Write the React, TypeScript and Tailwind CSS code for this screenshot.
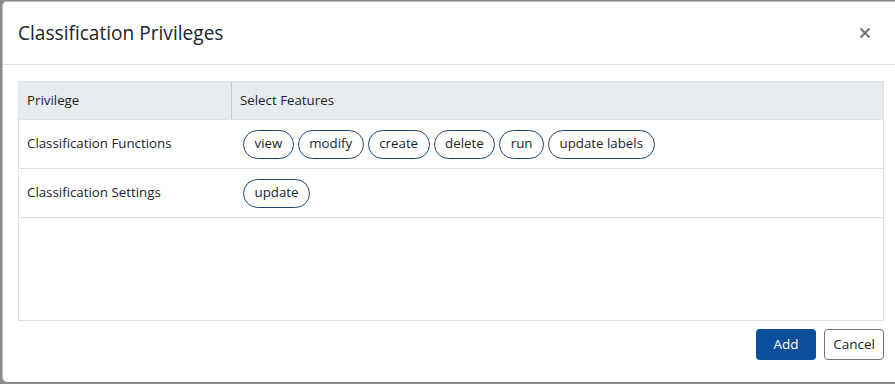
import React from "react";

const rows: { name: string; features: string[] }[] = [
  { name: "Classification Functions", features: ["view", "modify", "create", "delete", "run", "update labels"] },
  { name: "Classification Settings", features: ["update"] },
];

function Pill({ label }: { label: string }) {
  return (
    <button
      type="button"
      className="h-[29px] px-[10.5px] rounded-full border-[1.5px] border-[#1f4670] bg-white text-[13.3px] text-[#212529] leading-none"
    >
      {label}
    </button>
  );
}

export default function App() {
  return (
    <div
      className="w-[895px] h-[384px] bg-[#8a8a8a] pl-[2px] pt-[1px] overflow-hidden"
      style={{ fontFamily: '"Open Sans", "Noto Sans", sans-serif' }}
    >
      <div className="w-[910px] h-[381px] bg-white rounded-l-[5px] border-l border-t border-[#bdbdbd] flex flex-col">
        {/* header */}
        <div className="h-[63px] flex items-center justify-between pl-[15px] pr-[24px] border-b border-[#dee2e6] w-[892px]">
          <h2 className="text-[19.1px] text-[#212529]">Classification Privileges</h2>
          <button type="button" className="text-[#6c757d] leading-none">
            <svg width="12" height="12" viewBox="0 0 12 12">
              <path d="M1.5 1.5 L10.5 10.5 M10.5 1.5 L1.5 10.5" stroke="#6c757d" strokeWidth="2" />
            </svg>
          </button>
        </div>

        {/* body */}
        <div className="pl-[15px] pt-[16px] w-[881px]">
          <div className="border border-[#dee2e6] h-[240px] text-[13.3px] text-[#212529]">
            <div className="flex h-[38px] bg-[#e9ecef] border-b border-[#dee2e6] items-center">
              <div className="w-[213px] h-full flex items-center pl-[8px] border-r border-[#c4c9ce]">Privilege</div>
              <div className="flex-1 pl-[8px]">Select Features</div>
            </div>
            {rows.map((r) => (
              <div key={r.name} className="flex h-[49px] items-center border-b border-[#dee2e6]">
                <div className="w-[213px] pl-[8px]">{r.name}</div>
                <div className="flex-1 pl-[11px] flex gap-[4px]">
                  {r.features.map((f) => (
                    <Pill key={f} label={f} />
                  ))}
                </div>
              </div>
            ))}
          </div>
        </div>

        {/* footer */}
        <div className="w-[881px] flex justify-end gap-[8px] pt-[8px]">
          <button type="button" className="w-[60px] h-[31px] rounded-[4px] bg-[#0b4f9c] text-white text-[13.5px]">
            Add
          </button>
          <button
            type="button"
            className="w-[60px] h-[31px] rounded-[4px] border border-[#6c757d] bg-white text-[#212529] text-[13.5px]"
          >
            Cancel
          </button>
        </div>
      </div>
    </div>
  );
}
